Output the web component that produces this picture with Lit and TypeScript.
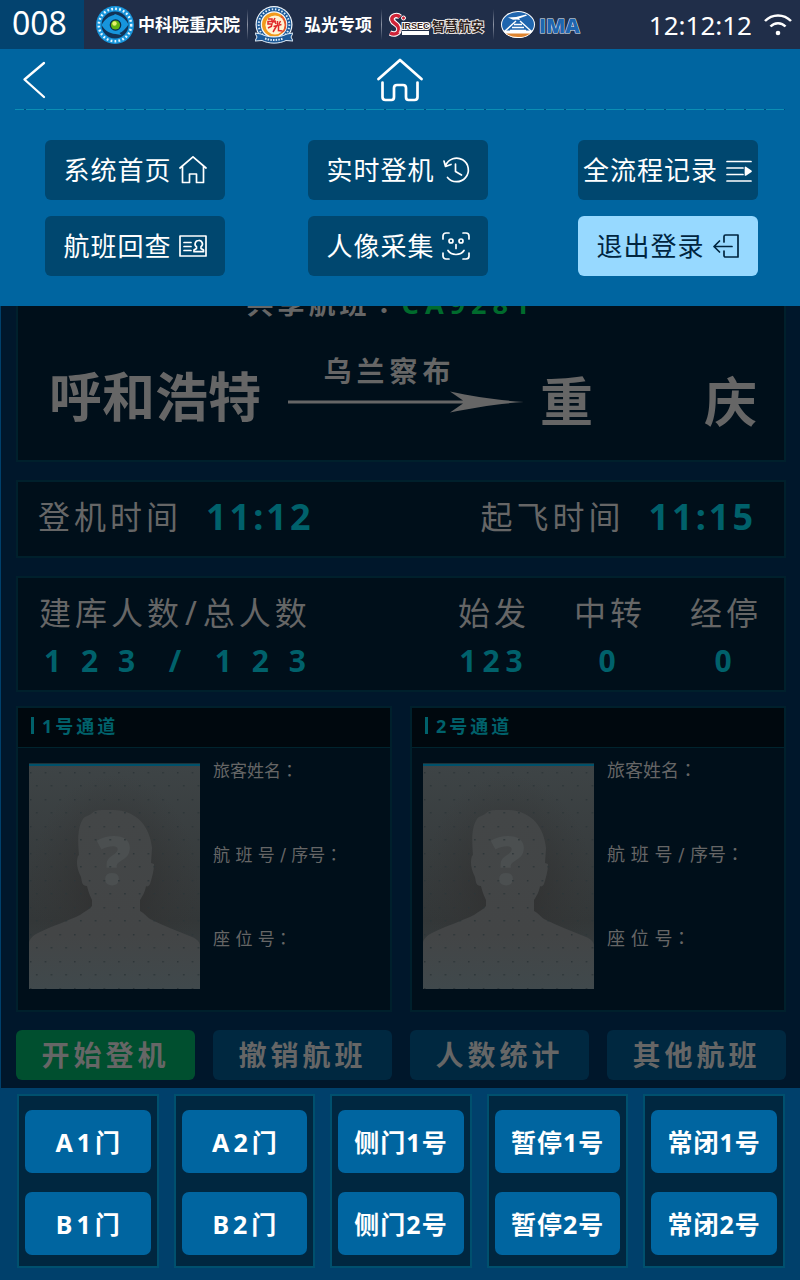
import { LitElement, html, css, svg } from "lit";
import { customElement, property } from "lit/decorators.js";
import { classMap } from "lit/directives/class-map.js";

const icons: Record<string, unknown> = {
  home: svg`<path d="M1 12 14 .8 27 12M3.500 10.500v16h7v-8.500h7v8.500h7v-16"/>`,
  history: svg`<path d="M3.600 9.500A11.800 11.800 0 1 1 5.500 21.500M2 5l1.500 5.500 5.500-2M13.500 8v7.500l6 3.500"/>`,
  records: svg`<path d="M2 5.500h24M2 12h16M2 18.500h16M2 25h24"/><path d="M20.500 11.500v7.500l5.500-3.750z" fill="currentColor"/>`,
  card: svg`<path d="M1 4h26v20H1zM5 10.500h7M5 14.500h7M5 18.500h7"/><path d="M19.500 8.500a3.500 3.500 0 0 0-2 6.300v1.700l-2.500 1.500v1.700h9.500V18L22 16.500v-1.700a3.500 3.500 0 0 0-2.500-6.300z"/>`,
  face: svg`<path d="M1 7V4a3 3 0 0 1 3-3h3M21 1h3a3 3 0 0 1 3 3v3M27 21v3a3 3 0 0 1-3 3h-3M7 27H4a3 3 0 0 1-3-3v-3M14 12.500v4M6 18.500c3.500 5.300 12.500 5.300 16 0"/><circle cx="9" cy="9" r="2"/><circle cx="19" cy="9" r="2"/>`,
  exit: svg`<path d="M12 10V4.500a1.500 1.500 0 0 1 1.500-1.500H26v22H13.500a1.500 1.500 0 0 1-1.500-1.500V19M20 14.500H2M7.500 9 2 14.500 7.500 20"/>`,
};

const casLogo = html`<svg class="logo" width="38" height="38" viewBox="0 0 38 38" aria-hidden="true">
  <circle cx="19" cy="19" r="19" fill="#1795dc"/>
  <circle cx="19" cy="19" r="16.200" fill="none" stroke="#e4f5ff" stroke-width="2.500" stroke-dasharray="1.800 2.200"/>
  <circle cx="19" cy="19" r="13.500" fill="#123357"/>
  <path d="M5.500 19C9 13 13 10 18 9l1-1 4 1.500c4 1.500 7.500 5 9.500 9-3 4.500-6 7.500-9 8.500l2 2-6-1C13 27.500 8.500 24 5.500 19z" fill="#1795dc"/>
  <circle cx="19.500" cy="19" r="5.800" fill="#0b2b4c"/>
  <circle cx="19.500" cy="19" r="4.600" fill="#62b512"/>
  <circle cx="18.500" cy="17.500" r="2.200" fill="#e9f26c"/>
</svg>`;

const hongguangLogo = html`<svg class="logo" width="38" height="38" viewBox="0 0 38 38" aria-hidden="true">
  <circle cx="19" cy="18.500" r="18.500" fill="#f3f8fc"/>
  <circle cx="19" cy="18.500" r="15.300" fill="none" stroke="#1b5998" stroke-width="4"/>
  <circle cx="19" cy="18.500" r="15.300" fill="none" stroke="#dcebf7" stroke-width="2" stroke-dasharray="1.500 1.800"/>
  <circle cx="19" cy="18.500" r="12" fill="#f19a1b"/>
  <path d="M26 9a12 12 0 0 1 3 17l-6 2z" fill="#e4572a"/>
  <circle cx="20" cy="19" r="9.600" fill="#fff3d4"/>
  <path d="M13 13h4v2.500h-4V18h4l-1 3M20 12l-2 4 3-1M22.500 15v5M20 16l1 2M25.500 15l-1.500 3M18.500 20.500l8-2M21.500 20l-3.500 6M23.500 20v4.500l4 .5M13 22l4-2" fill="none" stroke="#e02a2a" stroke-width="1.500"/>
  <path d="M0 27l6 1c8 4 18 4 26 0l6-1-2 4 2 4-7-.5c-7 3.500-17 3.500-24 0L0 35l2-4z" fill="#1b5998" stroke="#e4eff8"/>
  <path d="M10 32.500c6 2 12 2 18 0" fill="none" stroke="#e4eff8" stroke-width="2" stroke-dasharray="1.500 1.200"/>
</svg>`;

const sirsecLogo = html`<svg class="logo" width="97" height="30" viewBox="0 0 97 30" role="img" aria-label="SIRSEC 智慧航安">
  <path d="M11 7C8 4 2 6 3 10s7 4 7 9-5 6-9 4" fill="none" stroke="#fff" stroke-width="5.500"/>
  <path d="M11 7C8 4 2 6 3 10s7 4 7 9-5 6-9 4" fill="none" stroke="#cf2438" stroke-width="3.500"/>
  <path d="M8 8c-3-1-3 1-1 3 4 3 6 7 3 12" fill="none" stroke="#fff"/>
  <rect x="13" y="21" width="27" height="4" fill="#fff"/>
  <text class="sirsec" x="13" y="19">IRSEC</text>
  <circle cx="14.500" cy="8" r="2" fill="#cf2438" stroke="#fff"/>
  <text class="hangan" x="43" y="21">智慧航安</text>
</svg>`;

const imaLogo = html`<svg class="logo" width="80" height="30" viewBox="0 0 80 30" role="img" aria-label="IMA">
  <ellipse cx="17" cy="14.500" rx="17" ry="13.500" fill="#fff"/>
  <ellipse cx="17" cy="14.500" rx="16" ry="12.500" fill="#1f65ae"/>
  <path d="M2 20.500h30c-3 5-8 7.500-15 7.500S5 25.500 2 20.500z" fill="#fff"/>
  <path d="M5 23.500h24c-4 3-7 3.500-12 3.500s-8-.5-12-3.500z" fill="#dd8430"/>
  <path d="M7 7.500l8-.5 10-2.500 1 1-8 3 1 1.500-3-.5-4 .2z" fill="#fff"/>
  <path d="M15 11 4 21M19 11l11 10M13 14.500h8M11 17.500h12M9 20.500h16" stroke="#fff" stroke-width="1.400" fill="none"/>
  <text class="ima" x="38" y="23">IMA</text>
</svg>`;

@customElement("channel-card")
class ChannelCard extends LitElement {
  @property({ type: Number }) number = 1;
  @property({ type: Boolean }) large = false;

  static styles = css`
    :host { display: block; border: 2px solid #00202c; background: #000f1a; color: #666; }
    .title { margin: 0; display: flex; align-items: center; gap: 8px; height: 39px; padding: 0 0 4px 13px; box-sizing: border-box;
      background: #00080e; color: #00616b; font-size: 18px; line-height: 24px; font-weight: 700; letter-spacing: 3px; }
    .title::before { content: ""; width: 3px; height: 17px; background: #00616b; }
    .body { display: flex; gap: 13px; padding: 11px 10px 21px 11px; border-top: 1px solid #00242e; }
    .photo { flex: none; display: block; margin-top: 4px; }
    .mark { font: 900 68px "Noto Sans", sans-serif; fill: #4b4f50; }
    .fields { margin: 0; display: flex; flex-direction: column; gap: 60px; font-size: 17px; line-height: 24px; white-space: nowrap; }
    .fields.large { font-size: 18px; }
    .field { display: flex; }
    dt { font-family: "DejaVu Sans", "Noto Sans CJK SC", sans-serif; }
    .colon { font-family: "Noto Sans CJK TC", sans-serif; line-height: 0; }
    dd { margin: 0; }
  `;

  render() {
    const fields = ["旅客姓名", "航 班 号 / 序号", "座 位 号"];
    return html`
      <h2 class="title">${this.number}号通道</h2>
      <div class="body">
        <svg class="photo" width="171" height="226" viewBox="0 0 171 226" role="img" aria-label="旅客照片">
          <defs>
            <linearGradient id="edge" x1="0" y1="0" x2="0" y2="1">
              <stop offset="0" stop-color="#3e4446"/><stop offset=".7" stop-color="#333738"/><stop offset="1" stop-color="#3a4245"/>
            </linearGradient>
            <radialGradient id="middle" cx=".5" cy=".55" r=".5">
              <stop offset="0" stop-color="#2e2e2e"/><stop offset="1" stop-color="#363636" stop-opacity="0"/>
            </radialGradient>
            <linearGradient id="figure" x1="0" y1="0" x2="0" y2="1">
              <stop offset="0" stop-color="#434647"/><stop offset=".7" stop-color="#434546"/><stop offset="1" stop-color="#40494c"/>
            </linearGradient>
            <pattern id="dots" width="14.700" height="27" patternUnits="userSpaceOnUse">
              <rect x="1" y="9" width="1.500" height="1.500" fill="#2c3538"/><rect x="7" y="22" width="1.500" height="1.500" fill="#2c3538"/>
            </pattern>
          </defs>
          <rect width="171" height="226" fill="url(#edge)"/>
          <rect width="171" height="226" fill="url(#middle)"/>
          <path d="M0 226V180c0-3 4-8 9-10 14-7 30-12 42-18 5-4 9-5 12-9V137c-3-6-4-10-5-14-5 0-5-4-6-9-4-8-5-15-3-21l1-1c-1-13-2-27 4-36 2-3 5-3 8-5 4-5 12-4 19-4 27-1 40 17 42 38l-1 15 3 1c0 7-2 13-4 20-1 2-3 3-4 2-1 6-3 9-6 14v11c4 2 7 6 10 8 14 7 28 12 42 18 5 2 8 5 8 9v43z" fill="url(#figure)"/>
          <text class="mark" x="85" y="122" text-anchor="middle">?</text>
          <rect width="171" height="226" fill="url(#dots)"/>
          <rect width="171" height="1" fill="#1d3239"/><rect y="1" width="171" height="2" fill="#00516b"/>
        </svg>
        <dl class=${classMap({ fields: true, large: this.large })}>
          ${fields.map((label) => html`<div class="field"><dt>${label}<span class="colon">：</span></dt><dd></dd></div>`)}
        </dl>
      </div>`;
  }
}

@customElement("app-root")
class AppRoot extends LitElement {
  static styles = css`
    :host { display: block; position: relative; background: #00172b; color: #666;
      font-family: "Noto Sans", "Noto Sans CJK SC", sans-serif; }
    * { box-sizing: border-box; }
    button { font: inherit; border: 0; margin: 0; padding: 0; cursor: pointer; color: inherit; }
    svg { flex: none; }

    .top { display: flex; align-items: center; height: 49px; background: #202e49; color: #fff; padding-right: 8px; }
    .device { align-self: stretch; width: 84px; flex: none; display: flex; align-items: center; padding: 0 0 4px 12px;
      background: #03436f; font-size: 32px; line-height: 44px; }
    .brands { display: flex; align-items: center; gap: 7px; padding-left: 12px; font-size: 17px; line-height: 24px; font-weight: 700; white-space: nowrap; }
    .brand { display: flex; align-items: center; gap: 4px; }
    .wide { gap: 11px; padding-right: 2px; }
    .rule { width: 1px; height: 31px; background: linear-gradient(#202e49, #8b93a3, #202e49); }
    .logo { display: block; }
    .sirsec { font: 700 9px "Liberation Sans", sans-serif; fill: #3a2420; stroke: #fff; stroke-width: 2px; paint-order: stroke; }
    .hangan { font: 700 13px "Noto Sans CJK SC", sans-serif; fill: #2c2220; stroke: #e8e4e2; stroke-width: 2px; paint-order: stroke; }
    .ima { font: 800 20px "Open Sans", sans-serif; fill: #1f65ae; stroke: #e8f2fb; stroke-width: 1px; paint-order: stroke; }
    .clock { margin-left: auto; font-size: 26px; line-height: 36px; }
    .wifi { margin-left: 12px; }

    .nav { display: grid; grid-template-columns: 1fr auto 1fr; align-items: center; height: 61px; background: #0065a0; color: #fff; position: relative; }
    .nav::after { content: ""; position: absolute; left: 0; right: 0; bottom: 0; height: 1px; margin: 0 15px;
      background: repeating-linear-gradient(90deg, #0b8fb4 0 9px, #004a7c 9px 11px, #0b8fb4 11px 20px); }
    .back { justify-self: start; background: none; margin-left: 20px; display: flex; }
    .to-home { color: inherit; display: flex; }

    .menu { position: absolute; top: 110px; left: 0; right: 0; padding: 30px 42px 30px 45px; background: #0065a0;
      display: grid; grid-template-columns: 263fr 270fr 180px; row-gap: 16px; }
    .item { width: 180px; height: 60px; border-radius: 6px; background: #00476f; color: #fff; display: flex; align-items: center;
      justify-content: center; gap: 7px; font-size: 26px; line-height: 36px; letter-spacing: 1px; white-space: nowrap; }
    .item.exit { background: #97d9ff; color: #00253f; }
    .icon { fill: none; stroke: currentColor; stroke-width: 1.700; stroke-linecap: round; stroke-linejoin: round; }

    .main { border-left: 1px solid #00406b; padding: 16px 14px 8px 15px; display: grid; gap: 18px; }
    .panel { border: 2px solid #00202c; background: #000f1a; }
    .route { padding: 156px 27px 16px 31px; }
    .shared { margin: 0 0 31px; padding-right: 24px; text-align: center; font-size: 27px; line-height: 40px; font-weight: 700; letter-spacing: 4px; }
    .colon { font-family: "Noto Sans CJK TC", sans-serif; line-height: 0; }
    .code { color: #006b2d; letter-spacing: 6px; }
    .legs { display: flex; align-items: center; justify-content: space-between; font-weight: 700; font-size: 53px; line-height: 60px; }
    .city { white-space: nowrap; padding-bottom: 6px; }
    .dest { display: flex; justify-content: space-between; width: 217px; padding-top: 4px; }
    .via { display: flex; flex-direction: column; gap: 3px; margin-left: 10px; padding-bottom: 30px; font-size: 28px; line-height: 32px; letter-spacing: 5px; }
    .stopover { padding-left: 36px; }
    .times { display: flex; justify-content: space-between; padding: 15px 28px 19px 20px; }
    .time { display: flex; gap: 24px; align-items: center; line-height: 40px; }
    .label { font-size: 32px; line-height: 40px; letter-spacing: 4px; white-space: nowrap; }
    .slash { padding: 0 2px; }
    .value { color: #00616b; font-weight: 700; font-size: 36px; line-height: 40px; letter-spacing: 3px; }
    .lower { display: grid; gap: 14px; }
    .stats { display: flex; justify-content: space-between; padding: 15px 22px 9px 20px; }
    .stat { display: grid; gap: 8px; justify-items: center; }
    .stops { display: flex; gap: 44px; }
    .count { color: #00616b; font-weight: 700; font-size: 30px; line-height: 40px; letter-spacing: 6px; white-space: pre; }
    .total .count { padding-left: 6px; }
    .channels { display: grid; grid-template-columns: 1fr 1fr; gap: 18px; }
    .actions { display: grid; grid-template-columns: repeat(4, 1fr); gap: 18px; }
    .action { height: 50px; border-radius: 6px; background: #002840; font-size: 28px; line-height: 40px; font-weight: 700; letter-spacing: 4px; white-space: nowrap; }
    .action.start { background: #004f2f; }

    .gates { display: grid; grid-template-columns: repeat(5, 1fr); gap: 15px; padding: 6px 15px 12px 17px; background: #00406b; color: #fff; }
    .pair { display: grid; gap: 19px; padding: 14px 6px 11px; border: 2px solid #00506e; background: #002740; }
    .gate { height: 63px; border-radius: 7px; background: #0065a0; font-size: 25px; line-height: 32px; font-weight: 700; letter-spacing: 1px; white-space: nowrap; }
    .gate.spaced { letter-spacing: 4px; padding-left: 4px; }
  `;

  private menu = [
    ["系统首页", "home"], ["实时登机", "history"], ["全流程记录", "records"],
    ["航班回查", "card"], ["人像采集", "face"], ["退出登录", "exit"],
  ];
  private stops = [["始发", "123"], ["中转", "0"], ["经停", "0"]];
  private actions = ["开始登机", "撤销航班", "人数统计", "其他航班"];
  private gates = [["A1门", "B1门"], ["A2门", "B2门"], ["侧门1号", "侧门2号"], ["暂停1号", "暂停2号"], ["常闭1号", "常闭2号"]];

  render() {
    return html`
      <header class="top">
        <div class="device">008</div>
        <div class="brands">
          <span class="brand">${casLogo}<span>中科院重庆院</span></span>
          <span class="rule"></span>
          <span class="brand wide">${hongguangLogo}<span>弘光专项</span></span>
          <span class="rule"></span>
          ${sirsecLogo}
          <span class="rule"></span>
          ${imaLogo}
        </div>
        <time class="clock">12:12:12</time>
        <svg class="wifi" width="28" height="24" viewBox="0 0 28 24" fill="none" stroke="#fff" stroke-width="2.500" role="img" aria-label="Wi-Fi">
          <path d="M1 8c7-7.500 19-7.500 26 0M6.500 13.500c4-4.500 11-4.500 15 0"/><circle cx="14" cy="20" r="2.300" fill="#fff" stroke="none"/>
        </svg>
      </header>
      <nav class="nav">
        <button class="back" aria-label="返回">
          <svg width="28" height="38" viewBox="0 0 28 38" fill="none" stroke="#fff" stroke-width="2.300" stroke-linecap="round" stroke-linejoin="round"><path d="M24 2 4.500 18.500 24 36"/></svg>
        </button>
        <a class="to-home" href="#home" aria-label="首页">
          <svg width="46" height="44" viewBox="0 0 46 44" fill="none" stroke="#fff" stroke-width="2.700" stroke-linecap="round" stroke-linejoin="round">
            <path d="M1.500 21 23 2l21.500 19M5.500 24.500V39q0 3 3 3h6q2.500 0 2.500-3V30q0-3 3-3h6q3 0 3 3v9q0 3 2.500 3h6q3 0 3-3V24.500"/>
          </svg>
        </a>
      </nav>
      <main class="main">
        <section class="panel route">
          <p class="shared">共享航班<span class="colon">：</span><span class="code">CA9281</span></p>
          <div class="legs">
            <span class="city">呼和浩特</span>
            <span class="via"><span class="stopover">乌兰察布</span>
              <svg width="236" height="24" viewBox="0 0 236 24" aria-hidden="true"><path d="M0 10.500h175L162 1.500c24 5 45 8.500 74 10.500-29 2-50 5.500-74 10.500l13-9H0z" fill="#666"/></svg>
            </span>
            <span class="dest"><span>重</span><span>庆</span></span>
          </div>
        </section>
        <section class="panel times">
          <div class="time"><span class="label">登机时间</span><time class="value">11:12</time></div>
          <div class="time"><span class="label">起飞时间</span><time class="value">11:15</time></div>
        </section>
        <div class="lower">
          <section class="panel stats">
            <div class="stat total"><span class="label">建库人数<span class="slash">/</span>总人数</span><span class="count">1 2 3  /  1 2 3</span></div>
            <div class="stops">
              ${this.stops.map(([name, n]) => html`<div class="stat"><span class="label">${name}</span><span class="count">${n}</span></div>`)}
            </div>
          </section>
          <section class="channels">
            <channel-card .number=${1}></channel-card>
            <channel-card .number=${2} .large=${true}></channel-card>
          </section>
        </div>
        <div class="actions">
          ${this.actions.map((a, i) => html`<button class=${classMap({ action: true, start: i === 0 })}>${a}</button>`)}
        </div>
      </main>
      <footer class="gates">
        ${this.gates.map((pair, i) => html`<div class="pair">
          ${pair.map((g) => html`<button class=${classMap({ gate: true, spaced: i < 2 })}>${g}</button>`)}
        </div>`)}
      </footer>
      <div class="menu">
        ${this.menu.map(([label, icon]) => html`<button class=${classMap({ item: true, exit: icon === "exit" })}>
          <span>${label}</span><svg class="icon" width="28" height="28" viewBox="0 0 28 28" aria-hidden="true">${icons[icon]}</svg>
        </button>`)}
      </div>`;
  }
}
